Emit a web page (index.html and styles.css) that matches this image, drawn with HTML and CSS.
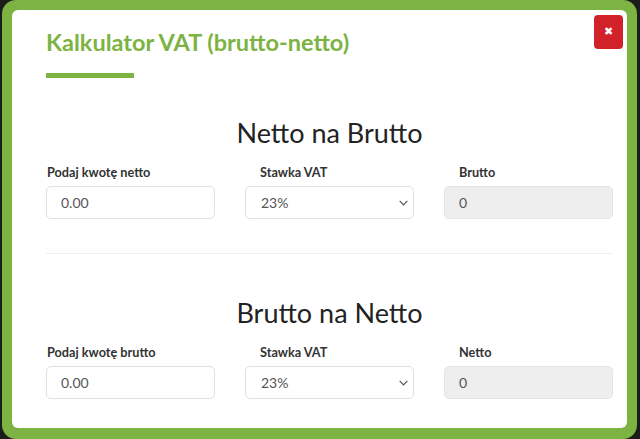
FILE: index.html
```html
<!DOCTYPE html>
<html lang="pl">
<head>
<meta charset="utf-8">
<title>Kalkulator VAT</title>
<link rel="stylesheet" href="styles.css">
</head>
<body>
<div class="frame">
  <div class="panel">
    <button class="close" type="button" aria-label="Zamknij">&#x2716;</button>
    <h2 class="title">Kalkulator VAT (brutto-netto)</h2>
    <div class="title-bar"></div>

    <section class="calc">
      <h3 class="calc-heading">Netto na Brutto</h3>
      <div class="calc-row">
        <div class="field">
          <label class="field-label">Podaj kwotę netto</label>
          <input class="control" type="text" value="0.00">
        </div>
        <div class="field">
          <label class="field-label field-label--indent">Stawka VAT</label>
          <div class="select-wrap">
            <select class="control control--select">
              <option>23%</option>
              <option>8%</option>
              <option>5%</option>
              <option>0%</option>
            </select>
            <svg class="chevron" width="9" height="6" viewBox="0 0 9 6"><path d="M0.7 0.8 L4.5 4.8 L8.3 0.8" fill="none" stroke="#555" stroke-width="1.2"/></svg>
          </div>
        </div>
        <div class="field">
          <label class="field-label field-label--indent">Brutto</label>
          <input class="control control--readonly" type="text" value="0" disabled>
        </div>
      </div>
    </section>

    <hr class="divider">

    <section class="calc">
      <h3 class="calc-heading">Brutto na Netto</h3>
      <div class="calc-row">
        <div class="field">
          <label class="field-label">Podaj kwotę brutto</label>
          <input class="control" type="text" value="0.00">
        </div>
        <div class="field">
          <label class="field-label field-label--indent">Stawka VAT</label>
          <div class="select-wrap">
            <select class="control control--select">
              <option>23%</option>
              <option>8%</option>
              <option>5%</option>
              <option>0%</option>
            </select>
            <svg class="chevron" width="9" height="6" viewBox="0 0 9 6"><path d="M0.7 0.8 L4.5 4.8 L8.3 0.8" fill="none" stroke="#555" stroke-width="1.2"/></svg>
          </div>
        </div>
        <div class="field">
          <label class="field-label field-label--indent">Netto</label>
          <input class="control control--readonly" type="text" value="0" disabled>
        </div>
      </div>
    </section>
  </div>
</div>
</body>
</html>
```
FILE: styles.css
```css
* {
  box-sizing: border-box;
}

html, body {
  margin: 0;
  padding: 0;
}

body {
  background: #1b1d1a;
  font-family: Lato, "Open Sans", "Liberation Sans", sans-serif;
  height: 439px;
  overflow: hidden;
}

.frame {
  margin: 0 3px 0 2px;
  height: 439px;
  background: #7cb342;
  border-radius: 14px;
  padding: 10px 10px 11px 10px;
}

.panel {
  position: relative;
  height: 100%;
  background: #ffffff;
  border-radius: 6px;
  padding: 18px 14px 0 34px;
}

.close {
  position: absolute;
  top: 5px;
  right: 4px;
  width: 29px;
  height: 34px;
  border: none;
  border-radius: 4px;
  background: #d12229;
  color: #ffffff;
  font-family: "DejaVu Sans", sans-serif;
  font-size: 11px;
  line-height: 34px;
  padding: 0;
  text-align: center;
}

.title {
  margin: 0;
  font-size: 23.5px;
  line-height: 28px;
  font-weight: 700;
  color: #7cb342;
}

.title-bar {
  margin-top: 17px;
  width: 88px;
  height: 5px;
  background: #7cb342;
}

.calc-heading {
  margin: 0 0 15px 0;
  text-align: center;
  font-size: 27px;
  line-height: 32px;
  font-weight: 400;
  color: #222222;
}

.title-bar + .calc {
  margin-top: 39px;
}

.calc-row {
  display: grid;
  grid-template-columns: repeat(3, 1fr);
  column-gap: 30px;
}

.field {
  display: flex;
  flex-direction: column;
}

.field-label {
  display: block;
  font-size: 12.7px;
  line-height: 16px;
  font-weight: 700;
  color: #333333;
  margin: 0 0 6px 1px;
}

.field-label--indent {
  padding-left: 14px;
}

.control {
  display: block;
  width: 100%;
  height: 33px;
  margin: 0;
  border: 1px solid #e0e0e0;
  border-radius: 5px;
  background: #ffffff;
  padding: 0 14px;
  font-family: Lato, "Open Sans", "Liberation Sans", sans-serif;
  font-size: 14px;
  color: #555555;
  outline: none;
}

.select-wrap {
  position: relative;
}

.control--select {
  -webkit-appearance: none;
  appearance: none;
  padding-left: 15px;
}

.chevron {
  position: absolute;
  right: 6px;
  top: 14px;
  pointer-events: none;
}

.control--readonly {
  background: #eeeeee;
  border-color: #e4e4e4;
  color: #555555;
  -webkit-text-fill-color: #555555;
  opacity: 1;
}

.divider {
  border: none;
  border-top: 1px solid #eeeeee;
  margin: 34px 0 43px 0;
  height: 0;
}
```
